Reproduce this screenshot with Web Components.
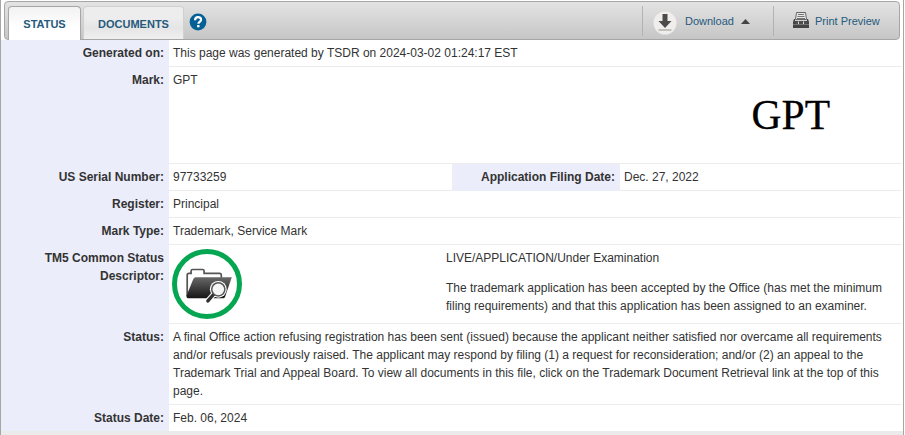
<!DOCTYPE html>
<html lang="en"><head><meta charset="utf-8"><title>Trademark status</title>
<style>html,body{margin:0;background:#fff}body{width:905px;height:435px;overflow:hidden;font:12px/18px "Liberation Sans",Arial,sans-serif;color:#333}</style></head>
<body>
<status-page>
<tab-toolbar slot="toolbar">
<tab-item active>STATUS</tab-item><tab-item>DOCUMENTS</tab-item><help-badge></help-badge>
<tool-action slot="actions" kind="download">Download</tool-action>
<tool-action slot="actions" kind="print">Print Preview</tool-action>
</tab-toolbar>
<field-row label="Generated on:" style="height:27px">This page was generated by TSDR on 2024-03-02 01:24:17 EST</field-row>
<field-row label="Mark:" style="height:97px"><mark-drawing>GPT</mark-drawing></field-row>
<field-row label="US Serial Number:" style="height:27px">97733259<field-row slot="extra" nested label="Application Filing Date:">Dec. 27, 2022</field-row></field-row>
<field-row label="Register:" style="height:27px">Principal</field-row>
<field-row label="Mark Type:" style="height:27px">Trademark, Service Mark</field-row>
<field-row label="TM5 Common Status Descriptor:" style="height:79px"><status-descriptor><span slot="title">LIVE/APPLICATION/Under Examination</span>The trademark application has been accepted by the Office (has met the minimum<br>filing requirements) and that this application has been assigned to an examiner.</status-descriptor></field-row>
<field-row label="Status:" style="height:81px">A final Office action refusing registration has been sent (issued) because the applicant neither satisfied nor overcame all requirements<br>and/or refusals previously raised. The applicant may respond by filing (1) a request for reconsideration; and/or (2) an appeal to the<br>Trademark Trial and Appeal Board. To view all documents in this file, click on the Trademark Document Retrieval link at the top of this<br>page.</field-row>
<field-row label="Status Date:" last style="height:26px">Feb. 06, 2024</field-row>
</status-page>
<script>
function define(name, html, setup){
  customElements.define(name, class extends HTMLElement{
    constructor(){super();this.attachShadow({mode:'open'}).innerHTML=html;}
    connectedCallback(){if(setup)setup(this,this.shadowRoot);}
  });
}
define('status-page',`<style>
:host{display:block;box-sizing:border-box;width:904px;height:435px;border-left:1px solid #a6a6a6;border-right:1px solid #a6a6a6;background:linear-gradient(#fff 0 431px,#ebebeb 431px);overflow:hidden}
main{display:flex;flex-direction:column;padding-right:1px}
</style><slot name="toolbar"></slot><main><slot></slot></main>`);
define('tab-toolbar',`<style>
:host{display:flex;box-sizing:border-box;height:39px;margin:1px 3px 0;border:1px solid #a6a6a6;border-radius:4px;background:linear-gradient(#e3e3e3,#c6c6c6);padding:4px 0 0 3px}
nav{display:flex;flex:1;gap:2px}
.actions{display:flex;height:30px}
</style><nav><slot></slot></nav><div class="actions"><slot name="actions"></slot></div>`);
define('tab-item',`<style>
:host{box-sizing:border-box;width:101px;height:33px;border:1px solid #d0d0d0;border-bottom:0;border-radius:4px 4px 0 0;background:linear-gradient(#ededed 0 35%,#e5e5e5 65%,#efefef);color:#255a7c;display:flex;justify-content:center;padding-top:8px;font-weight:bold;font-size:11px}
:host([active]){width:73px;height:34px;border-color:#a6a6a6;background:linear-gradient(#f2f2f2,#fff 60%)}
</style><slot></slot>`);
define('help-badge',`<style>:host{display:block;margin:7px 0 0 3px;width:18px;height:18px}svg{display:block}</style>
<svg width="18" height="18" viewBox="0 0 18 18"><circle cx="9" cy="9" r="8.4" fill="#056096"/><path d="M6.1 7.2C6.1 5 7.2 4.1 9 4.1s3.1 1 3.1 2.6c0 2.1-2.7 2.1-2.7 4" fill="none" stroke="#fff" stroke-width="2.2"/><path d="M8.1 12h2.4v2.3H8.1z" fill="#fff"/></svg>`);
const icons={
download:`<svg width="24" height="24" viewBox="0 0 24 24"><circle cx="12" cy="12" r="11.5" fill="#f0eeed"/><path d="M9.5 3h5v7h4L12 17 5.5 10h4z" fill="#4b4b4b"/><path d="M5.5 18h13v2h-13z" fill="#c2c2bd"/></svg>`,
print:`<svg width="16" height="16" viewBox="0 0 16 16"><path d="M3.5.5h9l1 7h-11z" fill="#e6e6e6" stroke="#666"/><path d="M5 2.5h6M4.5 4.5h7M4 6.5h8" stroke="#777"/><path d="M1 7h1v2h12V7h1l1 3v6H0v-6z" fill="#444"/><path d="M2 9h12v3H2z" fill="#4d4d4d"/><path d="M5.5 9.5V12M10.5 9.5V12" stroke="#d8d8d8"/><path d="M0 12.5h16" stroke="#8c8c8c" stroke-width=".7"/></svg>`};
define('tool-action',`<style>
:host{box-sizing:border-box;height:30px;border-left:1px solid #b2b2b2;display:flex;align-items:center;color:#255a7c;font-size:11px}
:host([kind=download]){width:131px;padding-left:10px}
:host([kind=print]){width:126px;padding-left:19px}
.icon{display:block}:host([kind=download]) .icon{padding-top:3px;margin-right:8px}
:host([kind=print]) .icon{margin-right:6px;margin-top:-2px}.icon svg{display:block}
.arrow{display:none}:host([kind=download]) .arrow{display:block;margin-left:7px}
</style><span class="icon"></span><slot></slot><svg class="arrow" width="9" height="5" viewBox="0 0 9 5"><path d="M0 5 4.5 0 9 5z" fill="#444"/></svg>`,
(host,root)=>{root.querySelector('.icon').innerHTML=icons[host.getAttribute('kind')];});
define('field-row',`<style>
:host{display:grid;grid-template-columns:168px 1fr auto;box-sizing:border-box}
:host([nested]){width:450px;height:27px;grid-template-columns:168px 1fr}
.label{background:#ebedfa;text-align:right;font-weight:bold;padding:4px 5px 0 35px}
:host([nested]) .label{padding-left:0}
.value{border-bottom:1px solid #ececee;padding:4px 0 0 4px;white-space:nowrap}
:host([last]) .value{border-bottom:0}
</style><div class="label"></div><div class="value"><slot></slot></div><slot name="extra"></slot>`,
(host,root)=>{root.querySelector('.label').textContent=host.getAttribute('label');});
define('mark-drawing',`<style>
:host{display:flex;justify-content:space-between;padding-right:72px}
.image{font:41.5px/48px "Liberation Serif","Times New Roman",serif;color:#000;padding-top:20px;-webkit-text-stroke:.3px #000}
</style><slot></slot><span class="image">GPT</span>`);
define('status-descriptor',`<style>
:host{display:grid;grid-template-columns:272px 1fr}
svg{display:block;margin:0 0 0 -1px}p{margin:12px 0 0}
.text{padding-left:1px}
</style><svg width="70" height="70" viewBox="0 0 70 70"><defs><linearGradient id="g" x2="0" y2="1"><stop stop-color="#686868"/><stop offset="1" stop-color="#151515"/></linearGradient></defs>
<circle cx="35" cy="35" r="32.5" fill="#fff" stroke="#05a651" stroke-width="5"/>
<path d="M15.2 47V26q0-1.7 1.7-1.7h2.2V22q0-1.5 1.5-1.5h10q1.5 0 1.5 1.5v2.3h15.5q1.7 0 1.7 1.7v3" fill="#fff" stroke="#555" stroke-width="1.7"/>
<path d="M14.4 47 21.3 30q.7-1.7 2.5-1.7h36L53 48q-.5 1.3-2 1.3H16q-1.6 0-1.6-2.3z" fill="url(#g)"/>
<path d="m41.5 45.5-6.3 7" stroke="#fff" stroke-width="5.5"/><circle cx="46.3" cy="40.3" r="8.4" fill="#fff"/>
<path d="m41.5 45.5-5.6 6.4" stroke="#303030" stroke-width="3.4" stroke-linecap="round"/><circle cx="46.3" cy="40.3" r="6.6" fill="#f5f5f5" stroke="#555" stroke-width="1.5"/></svg>
<div class="text"><slot name="title"></slot><p><slot></slot></p></div>`);
</script></body></html>
